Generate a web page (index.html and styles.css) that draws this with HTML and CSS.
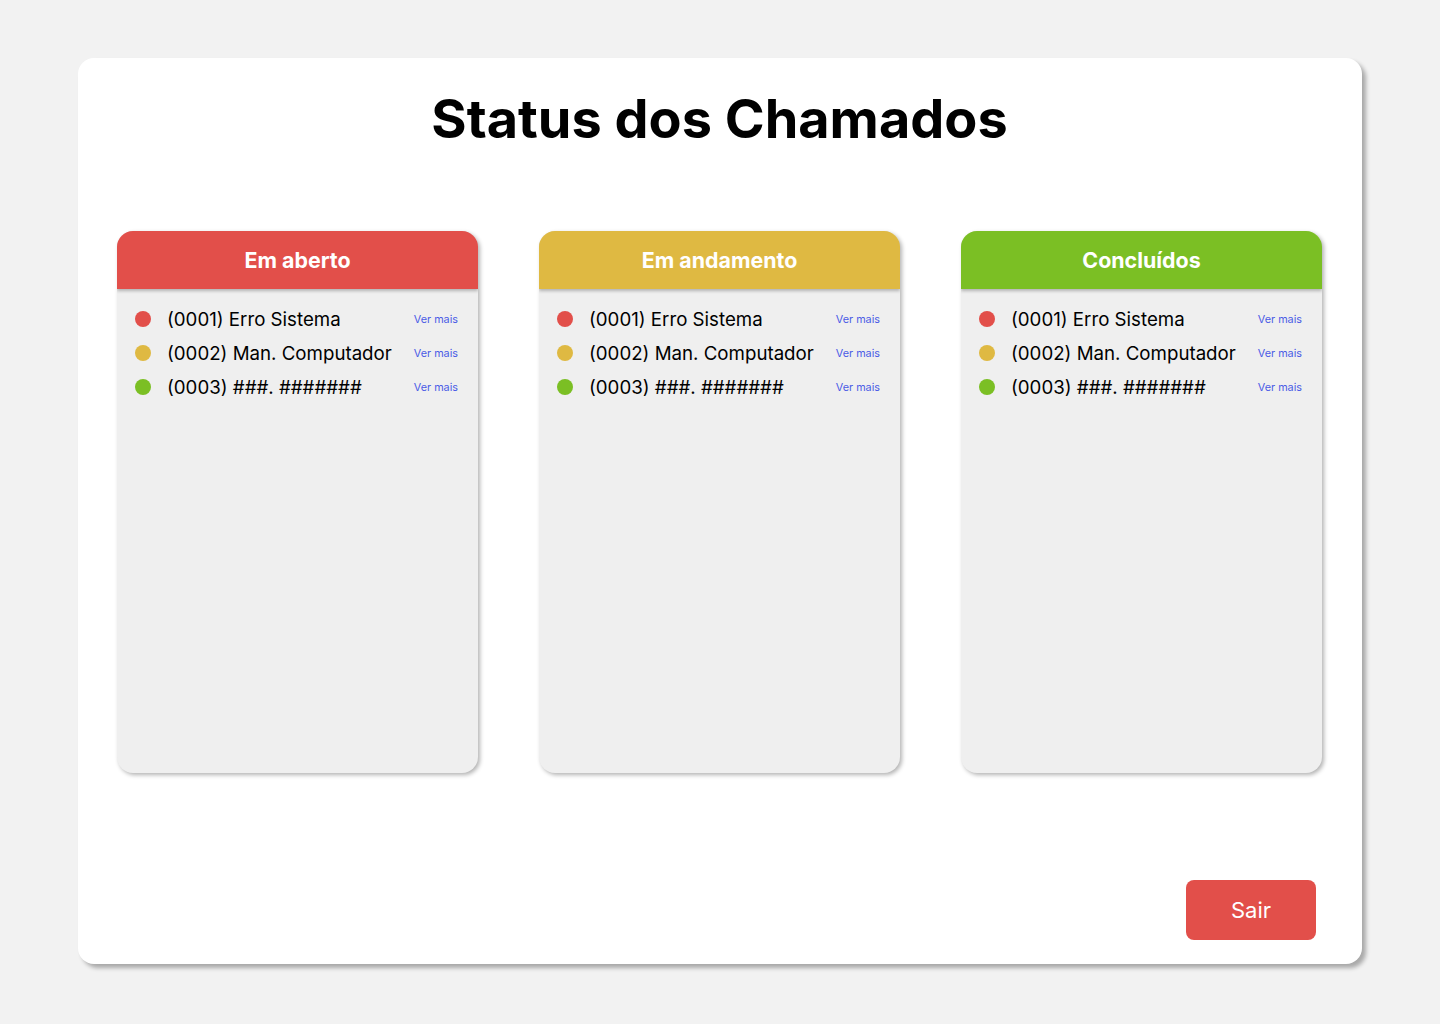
FILE: index.html
```html
<!DOCTYPE html>
<html lang="pt">
<head>
<meta charset="utf-8">
<title>Status dos Chamados</title>
<link rel="stylesheet" href="styles.css">
</head>
<body>
<main class="panel">
  <h1 class="title">Status dos Chamados</h1>
  <section class="columns">
    <div class="column">
      <div class="col-head red">Em aberto</div>
      <ul class="list">
        <li class="item"><span class="dot red"></span><span class="label">(0001) Erro Sistema</span><a class="more" href="#">Ver mais</a></li>
        <li class="item"><span class="dot yellow"></span><span class="label">(0002) Man. Computador</span><a class="more" href="#">Ver mais</a></li>
        <li class="item"><span class="dot green"></span><span class="label">(0003) ###. #######</span><a class="more" href="#">Ver mais</a></li>
      </ul>
    </div>
    <div class="column">
      <div class="col-head yellow">Em andamento</div>
      <ul class="list">
        <li class="item"><span class="dot red"></span><span class="label">(0001) Erro Sistema</span><a class="more" href="#">Ver mais</a></li>
        <li class="item"><span class="dot yellow"></span><span class="label">(0002) Man. Computador</span><a class="more" href="#">Ver mais</a></li>
        <li class="item"><span class="dot green"></span><span class="label">(0003) ###. #######</span><a class="more" href="#">Ver mais</a></li>
      </ul>
    </div>
    <div class="column">
      <div class="col-head green">Concluídos</div>
      <ul class="list">
        <li class="item"><span class="dot red"></span><span class="label">(0001) Erro Sistema</span><a class="more" href="#">Ver mais</a></li>
        <li class="item"><span class="dot yellow"></span><span class="label">(0002) Man. Computador</span><a class="more" href="#">Ver mais</a></li>
        <li class="item"><span class="dot green"></span><span class="label">(0003) ###. #######</span><a class="more" href="#">Ver mais</a></li>
      </ul>
    </div>
  </section>
  <div class="actions">
    <button class="btn-exit" type="button">Sair</button>
  </div>
</main>
</body>
</html>
```
FILE: styles.css
```css
* { box-sizing: border-box; }
html, body { margin: 0; padding: 0; }
body {
  background: #f2f2f2;
  font-family: Inter, "Liberation Sans", sans-serif;
  width: 1440px;
  height: 1024px;
  padding: 58px 0 0 78px;
}
.panel {
  width: 1284px;
  height: 906px;
  background: #ffffff;
  border-radius: 16px;
  box-shadow: 4px 4px 4px rgba(0,0,0,0.3);
  padding: 0 40px 24px 39px;
  display: flex;
  flex-direction: column;
}
.title {
  margin: 28px 0 0 0;
  text-align: center;
  font-size: 54px;
  line-height: 66px;
  font-weight: 700;
  color: #000;
  letter-spacing: 0;
}
.columns {
  margin-top: 79px;
  display: grid;
  grid-template-columns: repeat(3, 361px);
  column-gap: 61px;
}
.column {
  height: 542px;
  background: #efefef;
  border-radius: 16px;
  box-shadow: 2px 2px 4px rgba(0,0,0,0.3);
  overflow: hidden;
  display: flex;
  flex-direction: column;
}
.col-head {
  height: 58px;
  display: flex;
  align-items: center;
  justify-content: center;
  color: #fff;
  font-weight: 700;
  font-size: 21.4px;
  box-shadow: 0 2px 3px rgba(0,0,0,0.25);
  position: relative;
}
.col-head.red { background: #e24f4a; }
.col-head.yellow { background: #dfb942; }
.col-head.green { background: #7bbf24; }
.list {
  list-style: none;
  margin: 0;
  padding: 13px 20px 0 18px;
}
.item {
  display: flex;
  align-items: center;
  height: 34px;
}
.dot {
  width: 16px;
  height: 16px;
  border-radius: 50%;
  flex: none;
  margin-right: 16px;
}
.dot.red { background: #e24f4a; }
.dot.yellow { background: #dfb942; }
.dot.green { background: #7bbf24; }
.label {
  flex: 1;
  font-size: 18.7px;
  color: #000;
  white-space: nowrap;
}
.more {
  font-size: 10.8px;
  color: #4a5be6;
  text-decoration: none;
  margin-top: 1px;
}
.actions {
  margin-top: auto;
  display: flex;
  justify-content: flex-end;
  padding-right: 6px;
}
.btn-exit {
  width: 130px;
  height: 60px;
  border: none;
  border-radius: 8px;
  background: #e24f4a;
  color: #fff;
  font-family: Inter, "Liberation Sans", sans-serif;
  font-size: 22px;
  font-weight: 400;
  cursor: pointer;
}
```
